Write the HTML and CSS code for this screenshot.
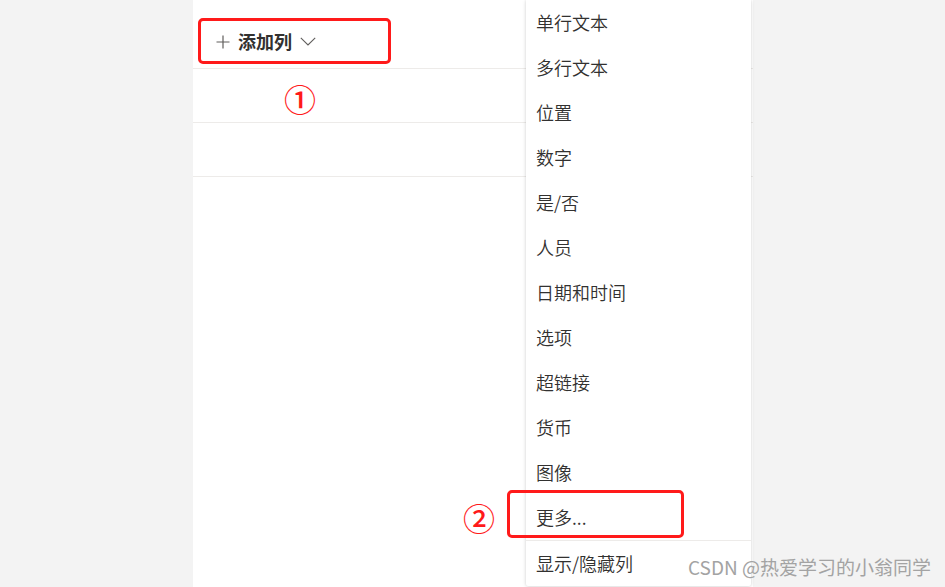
FILE: index.html
```html
<!DOCTYPE html>
<html lang="zh">
<head>
<meta charset="utf-8">
<link rel="stylesheet" href="styles.css">
</head>
<body>
<div class="page">
  <div class="gutter"></div>
  <div class="panel">
    <div class="head">
      <svg class="plus" width="14" height="14" viewBox="0 0 14 14"><path d="M7 0.5V13.5M0.5 7H13.5" stroke="#605e5c" stroke-width="1.2" fill="none"/></svg>
      <span class="head-label">添加列</span>
      <svg class="chev" width="16" height="9" viewBox="0 0 16 9"><path d="M0.8 0.8L8 8L15.2 0.8" stroke="#605e5c" stroke-width="1.1" fill="none"/></svg>
    </div>
    <div class="row"></div>
    <div class="row"></div>
  </div>
</div>

<div class="menu">
  <div class="item">单行文本</div>
  <div class="item">多行文本</div>
  <div class="item">位置</div>
  <div class="item">数字</div>
  <div class="item">是/否</div>
  <div class="item">人员</div>
  <div class="item">日期和时间</div>
  <div class="item">选项</div>
  <div class="item">超链接</div>
  <div class="item">货币</div>
  <div class="item">图像</div>
  <div class="item">更多...</div>
  <div class="sep"></div>
  <div class="item">显示/隐藏列</div>
</div>

<div class="mark mark-1"></div>
<div class="mark mark-2"></div>
<div class="num num-1">①</div>
<div class="num num-2">②</div>
<div class="watermark">CSDN @热爱学习的小翁同学</div>
</body>
</html>
```
FILE: styles.css
```css
html, body {
  margin: 0;
  padding: 0;
}
body {
  width: 945px;
  height: 587px;
  overflow: hidden;
  background: #f3f3f3;
  font-family: "Noto Sans CJK SC", "Noto Sans", sans-serif;
  position: relative;
}
.page {
  display: flex;
  height: 587px;
}
.gutter {
  width: 193px;
  flex: none;
}
.panel {
  width: 560px;
  background: #fff;
  display: flex;
  flex-direction: column;
}
.head {
  display: flex;
  align-items: center;
  padding-left: 23px;
  padding-top: 14px;
  box-sizing: border-box;
  height: 69px;
  border-bottom: 1px solid #edebe9;
}
.plus {
  margin-top: 1px;
}
.head-label {
  margin-left: 8px;
  font-size: 18px;
  font-weight: 700;
  color: #323130;
  line-height: 24px;
}
.chev {
  margin-left: 8px;
  margin-top: 1px;
}
.row {
  height: 53px;
  border-bottom: 1px solid #edebe9;
}
.menu {
  position: absolute;
  left: 526px;
  top: 0;
  width: 225px;
  background: #fff;
  box-shadow: 0 0 3px rgba(0,0,0,0.14), 0 1px 5px rgba(0,0,0,0.08);
  border-radius: 0 0 2px 2px;
}
.item {
  height: 45px;
  line-height: 45px;
  padding-left: 10px;
  font-size: 18px;
  font-weight: 350;
  color: #323130;
}
.sep {
  height: 1px;
  background: #edebe9;
}
.mark {
  position: absolute;
  border: 3.5px solid #ff1a1a;
  border-radius: 5px;
  box-sizing: border-box;
}
.mark-1 {
  left: 198px;
  top: 18px;
  width: 193px;
  height: 46px;
}
.mark-2 {
  left: 507px;
  top: 490px;
  width: 177px;
  height: 48px;
}
.num {
  position: absolute;
  color: #ff1a1a;
  font-size: 32px;
  line-height: 32px;
  font-weight: 500;
  font-family: "Noto Sans CJK SC", sans-serif;
}
.num-1 {
  left: 284px;
  top: 82px;
}
.num-2 {
  left: 463px;
  top: 501px;
}
.watermark {
  position: absolute;
  left: 688px;
  top: 554px;
  font-size: 19px;
  line-height: 26px;
  color: #a3a3a3;
  white-space: nowrap;
  font-family: "Noto Sans CJK SC", sans-serif;
}
```
